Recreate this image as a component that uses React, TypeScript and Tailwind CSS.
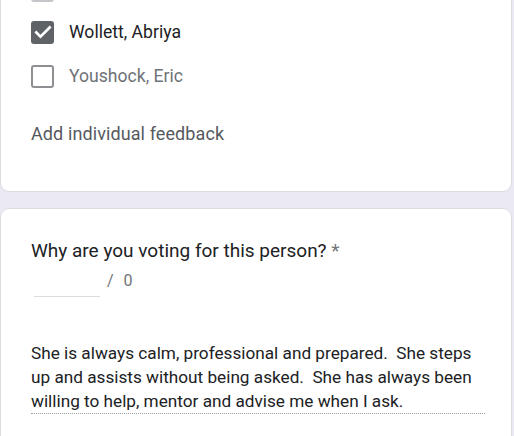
import React from 'react';

const CheckBox = ({ checked }: { checked: boolean }) =>
  checked ? (
    <div className="w-[23px] h-[23px] rounded-[3px] bg-[#5f6368] flex items-center justify-center">
      <svg width="20" height="20" viewBox="0 0 24 24" fill="none">
        <path d="M4 12.5l5 5L20 6.5" stroke="#fff" strokeWidth="3.2" strokeLinecap="square" />
      </svg>
    </div>
  ) : (
    <div className="w-[23px] h-[23px] rounded-[3px] border-2 border-[#8d8f92] bg-white" />
  );

const options = [
  { name: 'Wollett, Abriya', checked: true },
  { name: 'Youshock, Eric', checked: false },
];

export default function App() {
  return (
    <div className="min-h-screen bg-[#ebe9f4] overflow-hidden font-['Roboto',sans-serif]">
      <div className="w-[512px] bg-white border border-t-0 border-[#dadce0] rounded-b-[9px] mt-[-30px] pb-[45px]">
        {/* previous option, scrolled out of view */}
        <div className="h-[40px] flex items-center pl-[30px]">
          <div className="w-[23px] h-[23px] rounded-[3px] border-2 border-[#c4c6c9] bg-white" />
        </div>
        {options.map((o) => (
          <div key={o.name} className="h-[44px] flex items-center pl-[30px]">
            <CheckBox checked={o.checked} />
            <span className={`ml-[15px] text-[17.6px] ${o.checked ? 'text-[#202124]' : 'text-[#6f7276]'}`}>{o.name}</span>
          </div>
        ))}
        <div className="mt-[24px] pl-[30px] text-[18px] leading-[24px] text-[#55595e] tracking-[0.1px]">
          Add individual feedback
        </div>
      </div>

      <div className="mt-4 w-[512px] bg-white border border-[#dadce0] rounded-[9px] pt-[28px] pb-8">
        <div className="pl-[30px] text-[19px] leading-[28px] text-[#202124]">
          Why are you voting for this person? <span className="text-[#70757a]">*</span>
        </div>
        <div className="flex h-[32px] pl-[33px] items-center">
          <div className="w-[66px] h-full border-b border-[#dadce0]" />
          <span className="ml-[7px] text-[16px] text-[#70757a] tracking-[3px]">/ 0</span>
        </div>
        <p className="mt-[44px] ml-[30px] w-[454px] text-[17.2px] leading-[24px] text-[#202124] whitespace-pre-wrap border-b border-dotted border-[#9aa0a6]">
          {'She is always calm, professional and prepared.  She steps up and assists without being asked.  She has always been willing to help, mentor and advise me when I ask.'}
        </p>
      </div>
    </div>
  );
}
